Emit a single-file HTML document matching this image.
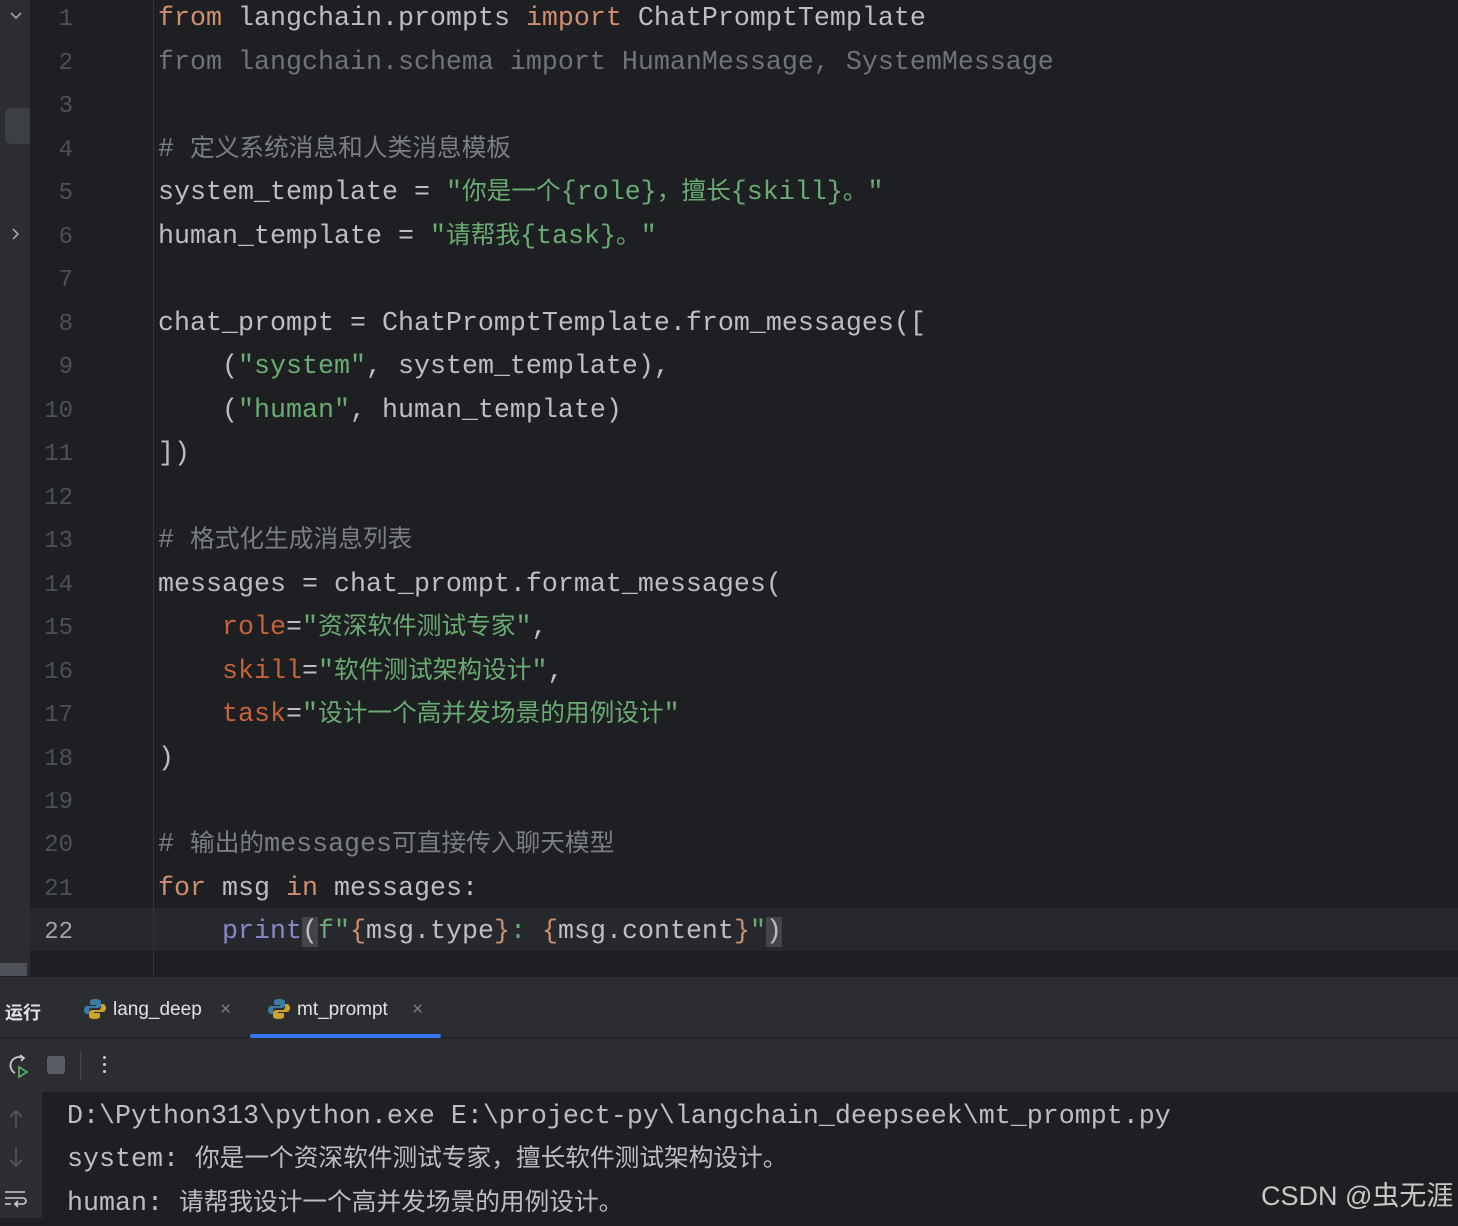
<!DOCTYPE html>
<html><head><meta charset="utf-8"><style>
*{margin:0;padding:0;box-sizing:border-box}
body{width:1458px;height:1218px;background:#1e1f22;position:relative;overflow:hidden;font-family:"Liberation Mono","Noto Sans CJK SC",monospace;}
.strip{position:absolute;left:0;top:0;width:30px;height:976px;background:#2b2d30}
.gutter{position:absolute;left:153px;top:0;width:1px;height:976px;background:#313438}
.wrap{position:absolute;left:0;top:3px;width:1458px;height:960px}
.ln{position:absolute;left:30px;width:43px;text-align:right;font-size:24px;color:#4b5059;height:43.48px;line-height:43.48px}
.code{position:absolute;left:158px;font-size:26.67px;color:#bcbec4;white-space:pre;height:43.48px;line-height:43.48px}
.c{font-size:24.7px}
.k{color:#cf8e6d}.s{color:#6aab73}.cm{color:#7a7e85}.na{color:#c5623a}.b{color:#8888c6}.g{color:#6f737a}.o{color:#cf8e6d}
.cur{position:absolute;left:30px;top:908px;width:1428px;height:43px;background:#26282e}
.panel{position:absolute;left:0;top:976px;width:1458px;height:116px;background:#2b2d30;border-top:1px solid #1e1f22}
.tabs{position:absolute;top:976px;left:0;width:1458px;height:62px;border-bottom:1px solid #1e1f22}
.con{position:absolute;left:0;top:1092px;width:42px;height:126px;background:#2b2d30}
.t{position:absolute;font-family:"Liberation Sans","Noto Sans CJK SC",sans-serif;font-size:19px;color:#dfe1e5}
.out{position:absolute;left:67px;font-size:26.67px;color:#bcbec4;white-space:pre;line-height:43px}
</style></head><body>
<div class="strip"></div>
<div style="position:absolute;left:5px;top:108px;width:25px;height:36px;background:#3c3f43;border-radius:6px 0 0 6px"></div>
<div style="position:absolute;left:0;top:963px;width:27px;height:13px;background:#4e5157"></div>
<svg style="position:absolute;left:9px;top:11px" width="14" height="10"><path d="M2 2 L7 7 L12 2" stroke="#a0a3a8" stroke-width="1.6" fill="none"/></svg>
<svg style="position:absolute;left:11px;top:227px" width="10" height="14"><path d="M2 2 L7 7 L2 12" stroke="#a0a3a8" stroke-width="1.6" fill="none"/></svg>
<div class="cur"></div>
<div class="gutter"></div>
<div class="wrap">
<div class="ln" style="top:-4.7px">1</div>
<div class="ln" style="top:38.8px">2</div>
<div class="ln" style="top:82.3px">3</div>
<div class="ln" style="top:125.7px">4</div>
<div class="ln" style="top:169.2px">5</div>
<div class="ln" style="top:212.7px">6</div>
<div class="ln" style="top:256.2px">7</div>
<div class="ln" style="top:299.7px">8</div>
<div class="ln" style="top:343.1px">9</div>
<div class="ln" style="top:386.6px">10</div>
<div class="ln" style="top:430.1px">11</div>
<div class="ln" style="top:473.6px">12</div>
<div class="ln" style="top:517.1px">13</div>
<div class="ln" style="top:560.5px">14</div>
<div class="ln" style="top:604px">15</div>
<div class="ln" style="top:647.5px">16</div>
<div class="ln" style="top:691px">17</div>
<div class="ln" style="top:734.5px">18</div>
<div class="ln" style="top:777.9px">19</div>
<div class="ln" style="top:821.4px">20</div>
<div class="ln" style="top:864.9px">21</div>
<div class="ln" style="top:908.4px;color:#a1a3ab">22</div>

<div class="code" style="top:-4.7px"><span class="k">from</span> langchain.prompts <span class="k">import</span> ChatPromptTemplate</div>
<div class="code g" style="top:38.8px">from langchain.schema import HumanMessage, SystemMessage</div>
<div class="code cm" style="top:125.7px"># <span class="c">定义系统消息和人类消息模板</span></div>
<div class="code" style="top:169.2px">system_template = <span class="s">"<span class="c">你是一个</span>{role}<span class="c">，擅长</span>{skill}<span class="c">。</span>"</span></div>
<div class="code" style="top:212.7px">human_template = <span class="s">"<span class="c">请帮我</span>{task}<span class="c">。</span>"</span></div>
<div class="code" style="top:299.7px">chat_prompt = ChatPromptTemplate.from_messages([</div>
<div class="code" style="top:343.1px">    (<span class="s">"system"</span>, system_template),</div>
<div class="code" style="top:386.6px">    (<span class="s">"human"</span>, human_template)</div>
<div class="code" style="top:430.1px">])</div>
<div class="code cm" style="top:517.1px"># <span class="c">格式化生成消息列表</span></div>
<div class="code" style="top:560.5px">messages = chat_prompt.format_messages(</div>
<div class="code" style="top:604px">    <span class="na">role</span>=<span class="s">"<span class="c">资深软件测试专家</span>"</span>,</div>
<div class="code" style="top:647.5px">    <span class="na">skill</span>=<span class="s">"<span class="c">软件测试架构设计</span>"</span>,</div>
<div class="code" style="top:691px">    <span class="na">task</span>=<span class="s">"<span class="c">设计一个高并发场景的用例设计</span>"</span></div>
<div class="code" style="top:734.5px">)</div>
<div class="code cm" style="top:821.4px"># <span class="c">输出的</span>messages<span class="c">可直接传入聊天模型</span></div>
<div class="code" style="top:864.9px"><span class="k">for</span> msg <span class="k">in</span> messages:</div>
<div class="code" style="top:908.4px">    <span class="b">print</span><span style="background:#43454a">(</span><span class="s">f"</span><span class="o">{</span>msg.type<span class="o">}</span><span class="s">: </span><span class="o">{</span>msg.content<span class="o">}</span><span class="s">"</span><span style="background:#43454a">)</span></div>
</div>

<div class="panel"></div>
<div class="tabs"></div>
<div class="t" style="left:5px;top:999px;font-weight:bold;font-size:18px">运行</div>
<svg style="position:absolute;left:84px;top:998px" width="22" height="22" viewBox="0 0 22 22"><path d="M11 1c-5 0-5 2-5 3v3h6v1H3c-2 0-3 2-3 4s1 4 3 4h2v-3c0-2 1-3 3-3h6c1 0 3-1 3-3V4c0-2-2-3-6-3z" fill="#3d7ba5"/><path d="M11 21c5 0 5-2 5-3v-3h-6v-1h9c2 0 3-2 3-4s-1-4-3-4h-2v3c0 2-1 3-3 3H8c-1 0-3 1-3 3v3c0 2 2 3 6 3z" fill="#c9a32a"/></svg>
<div class="t" style="left:113px;top:999px">lang_deep</div>
<div class="t" style="left:220px;top:999px;color:#7a7e85">×</div>
<svg style="position:absolute;left:268px;top:998px" width="22" height="22" viewBox="0 0 22 22"><path d="M11 1c-5 0-5 2-5 3v3h6v1H3c-2 0-3 2-3 4s1 4 3 4h2v-3c0-2 1-3 3-3h6c1 0 3-1 3-3V4c0-2-2-3-6-3z" fill="#3d7ba5"/><path d="M11 21c5 0 5-2 5-3v-3h-6v-1h9c2 0 3-2 3-4s-1-4-3-4h-2v3c0 2-1 3-3 3H8c-1 0-3 1-3 3v3c0 2 2 3 6 3z" fill="#c9a32a"/></svg>
<div class="t" style="left:297px;top:999px">mt_prompt</div>
<div class="t" style="left:412px;top:999px;color:#7a7e85">×</div>
<div style="position:absolute;left:250px;top:1034px;width:191px;height:4px;background:#3574f0;border-radius:2px"></div>
<svg style="position:absolute;left:6px;top:1053px" width="26" height="26" viewBox="0 0 26 26"><path d="M17 5A8 8 0 1 0 9 20" stroke="#c9ccd1" stroke-width="1.8" fill="none"/><path d="M14 2l4 3-3 3" stroke="#c9ccd1" stroke-width="1.6" fill="none"/><path d="M13 14v10l8-5z" stroke="#5fb865" stroke-width="1.6" fill="none"/></svg>
<div style="position:absolute;left:47px;top:1056px;width:18px;height:18px;background:#5a5d63;border-radius:3px"></div>
<div style="position:absolute;left:80px;top:1051px;width:1px;height:29px;background:#43454a"></div>
<div style="position:absolute;left:103px;top:1056px;width:3px;height:3px;background:#c9ccd1;border-radius:2px;box-shadow:0 7px 0 #c9ccd1,0 14px 0 #c9ccd1"></div>
<div class="con"></div>
<svg style="position:absolute;left:7px;top:1108px" width="18" height="22"><path d="M9 21V3M3 9l6-6 6 6" stroke="#55585e" stroke-width="1.6" fill="none"/></svg>
<svg style="position:absolute;left:7px;top:1147px" width="18" height="22"><path d="M9 1v18M3 13l6 6 6-6" stroke="#55585e" stroke-width="1.6" fill="none"/></svg>
<svg style="position:absolute;left:4px;top:1189px" width="24" height="20"><path d="M1 3h20M1 9h18a3 3 0 0 1 0 6h-8M14 12l-3 3 3 3M1 15h6" stroke="#c9ccd1" stroke-width="1.6" fill="none"/></svg>
<div class="out" style="top:1096px">D:\Python313\python.exe E:\project-py\langchain_deepseek\mt_prompt.py</div>
<div class="out" style="top:1139px">system: <span class="c">你是一个资深软件测试专家，擅长软件测试架构设计。</span></div>
<div class="out" style="top:1183px">human: <span class="c">请帮我设计一个高并发场景的用例设计。</span></div>
<div style="position:absolute;left:1261px;top:1174px;font-family:'Liberation Sans','Noto Sans CJK SC',sans-serif;font-size:27px;color:#c8c8c8;white-space:nowrap">CSDN @虫无涯</div>
</body></html>
